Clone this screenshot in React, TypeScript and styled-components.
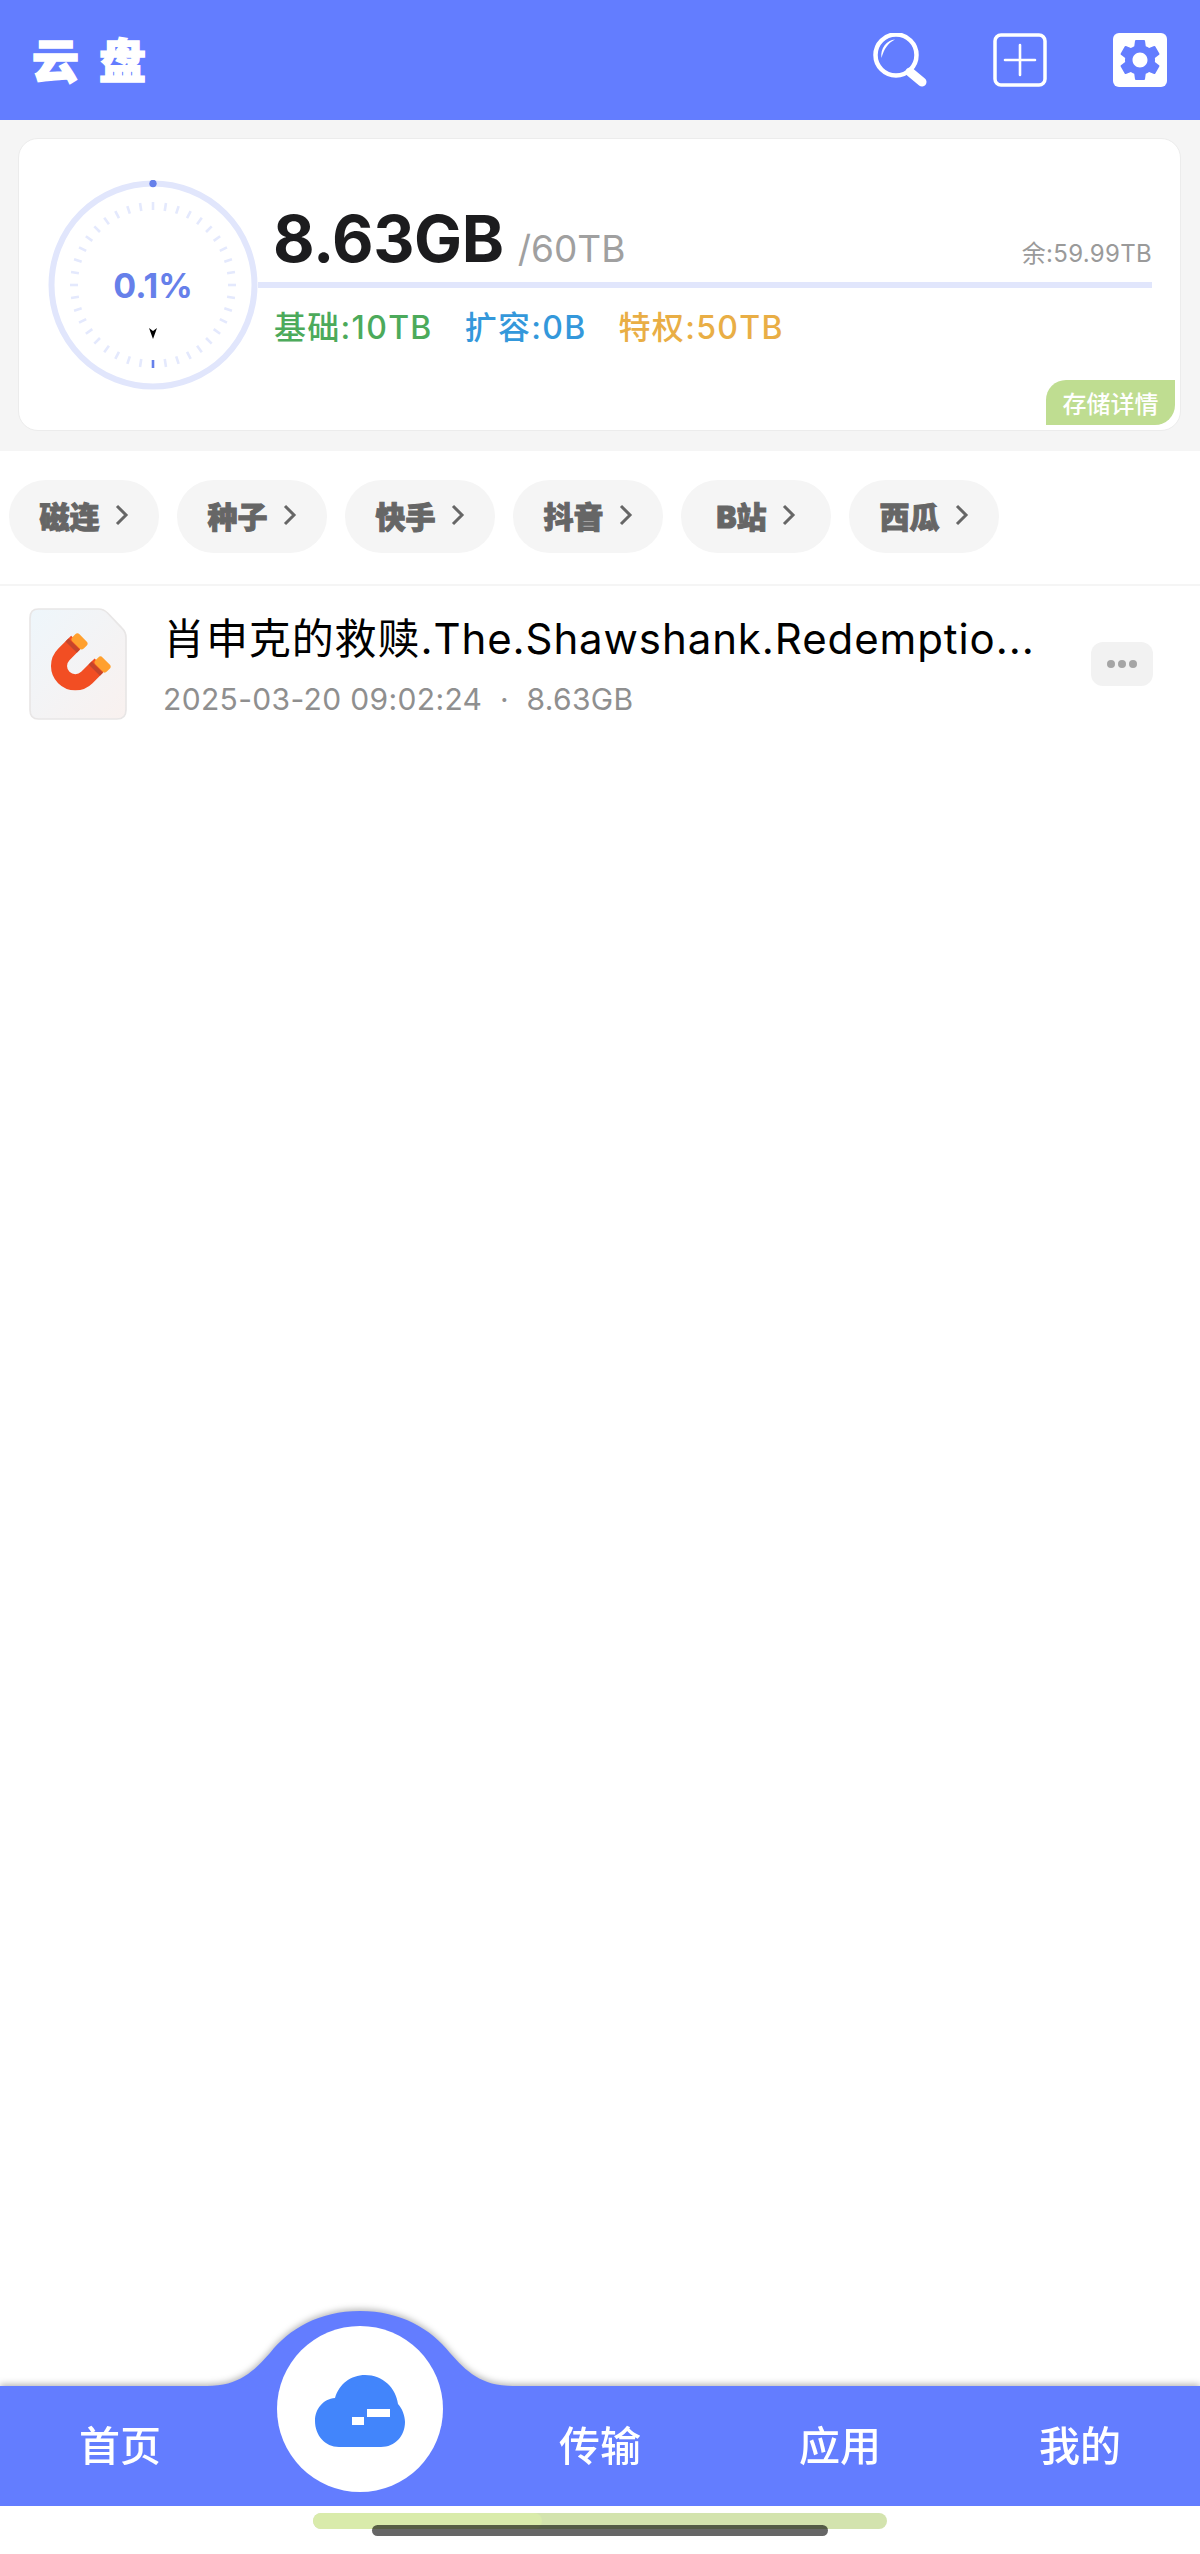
import React from "react";
import styled, { createGlobalStyle } from "styled-components";
import { MdSettings } from "react-icons/md";

const BLUE = "#637dff";

const GlobalStyle = createGlobalStyle`
  html, body {
    margin: 0;
    padding: 0;
    background: #fff;
    font-family: Inter, "Noto Sans CJK SC", sans-serif;
  }
`;

const Page = styled.div`
  width: 1200px;
  height: 2554px;
  display: flex;
  flex-direction: column;
  overflow: hidden;
  background: #fff;
`;

const Header = styled.header`
  height: 120px;
  flex: none;
  display: flex;
  align-items: center;
  justify-content: space-between;
  padding: 0 33px 0 32px;
  background: ${BLUE};
`;

const Title = styled.h1`
  margin: 0 0 5px;
  font-size: 47px;
  font-weight: 900;
  letter-spacing: 20px;
  color: #fff;
  -webkit-text-stroke: 1.5px #fff;
`;

const HeaderIcons = styled.div`
  display: flex;
  align-items: center;
  gap: 66px;
`;

const IconSvg = styled.svg`
  display: block;
  width: 54px;
  height: 54px;
`;

const GearBox = styled.div`
  width: 54px;
  height: 54px;
  display: flex;
  align-items: center;
  justify-content: center;
  border-radius: 6px;
  background: #fff;
  color: ${BLUE};
  font-size: 50px;
`;

const StorageBand = styled.section`
  flex: none;
  height: 331px;
  box-sizing: border-box;
  padding: 18px 19px 20px 18px;
  background: #f5f5f5;
`;

const StorageCard = styled.div`
  position: relative;
  height: 293px;
  box-sizing: border-box;
  display: flex;
  padding: 41px 28px 0 29px;
  border: 1px solid #ececec;
  border-radius: 20px;
  background: #fff;
`;

const Gauge = styled.div`
  position: relative;
  flex: none;
  width: 210px;
  height: 210px;
`;

const GaugeText = styled.span`
  position: absolute;
  left: 0;
  right: 0;
  top: 84px;
  text-align: center;
  font-size: 34px;
  line-height: 44px;
  font-weight: 700;
  color: #6680ea;
`;

const Usage = styled.div`
  flex: 1;
  height: 210px;
  display: grid;
  grid-template-rows: 1fr 6px 1fr;
`;

const UsageTop = styled.div`
  display: flex;
  align-items: baseline;
  align-self: end;
  padding: 0 0 2px 15px;
  height: 82px;
`;

const UsedValue = styled.span`
  font-size: 64px;
  line-height: 82px;
  font-weight: 700;
  letter-spacing: -0.4px;
  color: #1c1c1e;
`;

const TotalValue = styled.span`
  margin-left: 14px;
  font-size: 37px;
  color: #a0a0a0;
`;

const Remaining = styled.span`
  margin-left: auto;
  font-size: 24px;
  letter-spacing: 0.3px;
  color: #9a9a9a;
`;

const UsageLine = styled.div`
  background: #e1e6fc;
`;

const Quotas = styled.div`
  display: flex;
  gap: 32px;
  padding: 18px 0 0 16px;
`;

const Quota = styled.span<{ $color: string }>`
  font-size: 32px;
  line-height: 44px;
  font-weight: 500;
  letter-spacing: 1.3px;
  color: ${(p) => p.$color};
`;

const DetailBadge = styled.div`
  position: absolute;
  right: 5px;
  bottom: 5px;
  width: 129px;
  height: 45px;
  display: flex;
  align-items: center;
  justify-content: center;
  border-radius: 20px 0 20px 0;
  background: #bfdd91;
  font-size: 24px;
  font-weight: 500;
  color: #fff;
`;

const ChipBar = styled.nav`
  flex: none;
  display: flex;
  gap: 18px;
  padding: 29px 0 31px 9px;
  border-bottom: 2px solid #f5f5f5;
`;

const Chip = styled.div`
  width: 150px;
  height: 73px;
  box-sizing: border-box;
  padding-bottom: 4px;
  display: flex;
  align-items: center;
  justify-content: center;
  gap: 15px;
  border-radius: 37px;
  background: #f5f5f5;
  font-size: 30px;
  font-weight: 900;
  color: #666;
  -webkit-text-stroke: 1px #666;
`;

const ChipArrow = styled.svg`
  display: block;
  width: 14px;
  height: 22px;
`;

const FileRow = styled.div`
  flex: none;
  display: flex;
  align-items: center;
  padding: 22px 47px 0 29px;
`;

const FileIcon = styled.svg`
  flex: none;
  display: block;
  width: 98px;
  height: 112px;
`;

const FileInfo = styled.div`
  flex: 1;
  min-width: 0;
  margin-left: 36px;
`;

const FileName = styled.div`
  font-size: 42px;
  line-height: 60px;
  letter-spacing: 0.9px;
  white-space: nowrap;
  color: #000;
`;

const FileMeta = styled.div`
  margin-top: 10px;
  font-size: 30px;
  line-height: 40px;
  letter-spacing: 0.35px;
  color: #8f8f8f;
  white-space: pre;
`;

const MoreButton = styled.div`
  flex: none;
  width: 62px;
  height: 44px;
  display: flex;
  align-items: center;
  justify-content: center;
  gap: 3px;
  border-radius: 12px;
  background: #f2f2f2;
`;

const MoreDot = styled.i`
  width: 8px;
  height: 8px;
  border-radius: 50%;
  background: #a5a5a5;
`;

const Spacer = styled.div`
  flex: 1;
`;

const TabBarWrap = styled.div`
  position: relative;
  flex: none;
  filter: drop-shadow(0 -2px 3px rgba(0, 0, 0, 0.28));
`;

const Hump = styled.svg`
  position: absolute;
  left: 207px;
  top: -75px;
  display: block;
  width: 306px;
  height: 76px;
`;

const TabBar = styled.div`
  height: 120px;
  display: grid;
  grid-template-columns: repeat(5, 240px);
  background: ${BLUE};
`;

const Tab = styled.div`
  position: relative;
  display: flex;
  align-items: center;
  justify-content: center;
  padding-bottom: 7px;
  font-size: 41px;
  font-weight: 500;
  color: #fff;
`;

const CloudButton = styled.div`
  position: absolute;
  left: 37px;
  top: -60px;
  width: 166px;
  height: 166px;
  display: flex;
  align-items: center;
  justify-content: center;
  border-radius: 50%;
  background: #fff;
`;

const CloudIcon = styled.svg`
  display: block;
  width: 90px;
  height: 72px;
  margin-top: 3px;
`;

const Footer = styled.div`
  position: relative;
  flex: none;
  height: 48px;
  background: #fff;
`;

const Progress = styled.div`
  position: absolute;
  left: 313px;
  top: 7px;
  width: 574px;
  height: 16px;
  border-radius: 8px;
  background: #d3e3ae;
  overflow: hidden;
`;

const ProgressPart = styled.div`
  width: 229px;
  height: 16px;
  border-radius: 8px;
  background: #d9ebab;
`;

const HomeIndicator = styled.div`
  position: absolute;
  left: 372px;
  top: 19px;
  width: 456px;
  height: 11px;
  border-radius: 6px;
  background: rgba(0, 0, 0, 0.6);
`;

const chips = ["磁连", "种子", "快手", "抖音", "B站", "西瓜"];
const ticks = Array.from({ length: 40 }, (_, i) => i * 9);

const Arrow = () => (
  <ChipArrow viewBox="0 0 14 22">
    <path d="M2 2l9 9-9 9" fill="none" stroke="#666" strokeWidth="3" />
  </ChipArrow>
);

const GaugeDial = () => (
  <svg width="210" height="210" viewBox="0 0 210 210" style={{ display: "block" }}>
    <circle cx="105" cy="105" r="101.5" fill="none" stroke="#e1e6fc" strokeWidth="6" />
    {ticks.map((deg) => (
      <line
        key={deg}
        x1="105"
        y1="22"
        x2="105"
        y2="30"
        stroke={deg === 180 ? "#6680ea" : "#e4e9fd"}
        strokeWidth="2.6"
        transform={`rotate(${deg} 105 105)`}
      />
    ))}
    <circle cx="105" cy="3.5" r="3.7" fill="#6680ea" />
    <path d="M101 148l4 3 4-3-4 11z" fill="#000" />
  </svg>
);

export default function App() {
  return (
    <Page>
      <GlobalStyle />
      <Header>
        <Title>云盘</Title>
        <HeaderIcons>
          <IconSvg viewBox="0 0 54 54">
            <circle cx="23" cy="22" r="20.5" fill="none" stroke="#fff" strokeWidth="4.5" />
            <path d="M8.5 25C7 15 14 7 22 6.5C15 10 11 16 8.5 25z" fill="#fff" />
            <path d="M37 39l12 10" stroke="#fff" strokeWidth="9" strokeLinecap="round" />
          </IconSvg>
          <IconSvg viewBox="0 0 54 54">
            <rect x="2" y="2" width="50" height="50" rx="6" fill="none" stroke="#fff" strokeWidth="3.5" />
            <path d="M27 12v30M12 27h30" stroke="#fff" strokeWidth="2.6" strokeLinecap="round" />
          </IconSvg>
          <GearBox>
            <MdSettings />
          </GearBox>
        </HeaderIcons>
      </Header>

      <StorageBand>
        <StorageCard>
          <Gauge>
            <GaugeDial />
            <GaugeText>0.1%</GaugeText>
          </Gauge>
          <Usage>
            <UsageTop>
              <UsedValue>8.63GB</UsedValue>
              <TotalValue>/60TB</TotalValue>
              <Remaining>余:59.99TB</Remaining>
            </UsageTop>
            <UsageLine />
            <Quotas>
              <Quota $color="#4caa5b">基础:10TB</Quota>
              <Quota $color="#3498db">扩容:0B</Quota>
              <Quota $color="#e9ae45">特权:50TB</Quota>
            </Quotas>
          </Usage>
          <DetailBadge>存储详情</DetailBadge>
        </StorageCard>
      </StorageBand>

      <ChipBar>
        {chips.map((c) => (
          <Chip key={c}>
            {c}
            <Arrow />
          </Chip>
        ))}
      </ChipBar>

      <FileRow>
        <FileIcon viewBox="57 50 293 335">
          <defs>
            <linearGradient id="docBg" x1="0" y1="0" x2="1" y2="1">
              <stop offset="0" stopColor="#eef6fb" />
              <stop offset="1" stopColor="#f9f1ef" />
            </linearGradient>
          </defs>
          <path
            d="M85 53H265Q280 53 292 65L335 110Q347 122 347 138V355Q347 382 320 382H85Q60 382 60 355V80Q60 53 85 53z"
            fill="url(#docBg)"
            stroke="#e8e6e6"
            strokeWidth="5"
          />
          <path d="M200 150L161 189A48.5 48.5 0 0 0 230 258L270 218" fill="none" stroke="#f24e23" strokeWidth="48" />
          <path d="M183 167L192 158M252 236L261 227" stroke="#c5452b" strokeWidth="48" />
          <rect x="-24" y="-15" width="48" height="30" rx="9" fill="#ffa02e" transform="translate(208 150) rotate(45)" />
          <rect x="-24" y="-15" width="48" height="30" rx="9" fill="#ffa02e" transform="translate(277 219) rotate(45)" />
        </FileIcon>
        <FileInfo>
          <FileName>肖申克的救赎.The.Shawshank.Redemptio...</FileName>
          <FileMeta>2025-03-20 09:02:24  ·  8.63GB</FileMeta>
        </FileInfo>
        <MoreButton>
          <MoreDot />
          <MoreDot />
          <MoreDot />
        </MoreButton>
      </FileRow>

      <Spacer />

      <TabBarWrap>
        <Hump viewBox="0 0 306 76">
          <path
            d="M0 75C32 75 47 60 63 42C82 18 112 0 153 0C194 0 224 18 243 42C259 60 274 75 306 75V76H0z"
            fill={BLUE}
          />
        </Hump>
        <TabBar>
          <Tab>首页</Tab>
          <Tab>
            <CloudButton>
              <CloudIcon viewBox="0 0 90 72">
                <path
                  d="M20 23C24 9 36 0 50 0C68 0 81 13 83 29C87 33 90 41 90 47C90 61 80 72 66 72H24C10 72 0 60 0 46C0 34 8 24 20 23z"
                  fill="#4285fb"
                />
                <path d="M52 34h23v8H52zM37 42h12v8H37z" fill="#fff" />
              </CloudIcon>
            </CloudButton>
          </Tab>
          <Tab>传输</Tab>
          <Tab>应用</Tab>
          <Tab>我的</Tab>
        </TabBar>
      </TabBarWrap>

      <Footer>
        <Progress>
          <ProgressPart />
        </Progress>
        <HomeIndicator />
      </Footer>
    </Page>
  );
}
